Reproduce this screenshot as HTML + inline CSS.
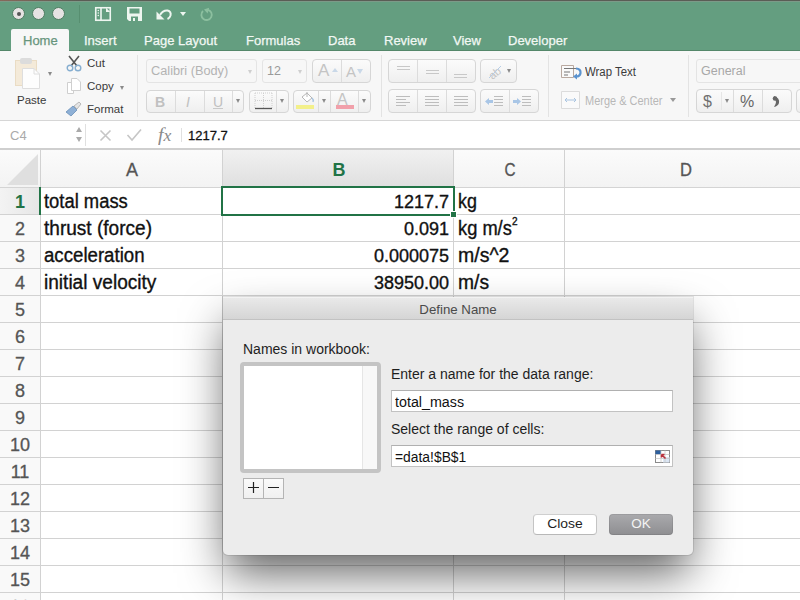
<!DOCTYPE html><html><head><meta charset="utf-8"><style>
*{box-sizing:border-box;margin:0;padding:0}
html,body{width:800px;height:600px;overflow:hidden;background:#fff;font-family:"Liberation Sans",sans-serif}
.a{position:absolute}
.tl{width:13px;height:13px;border-radius:50%;background:#e6e3e3;border:1px solid #4f7d62;top:7px}
.tab{top:33px;font-size:13px;color:#f2f8f4;white-space:nowrap;line-height:15px;-webkit-text-stroke:0.25px currentColor}
.btn{border:1px solid #d6d6d6;border-radius:4px;background:linear-gradient(#fbfbfb,#efefef)}
.box{border:1px solid #e4e4e4;border-radius:3px;background:#f7f7f7}
.vs{width:1px;background:#dedede}
.rt{font-size:12px;color:#333;white-space:nowrap;line-height:14px}
.g{color:#b8b8b8}
.hdr{top:150px;height:37px;font-size:18px;color:#555;text-align:center;line-height:37px;background:linear-gradient(#f6f6f6,#eeeeee)}
.cell{font-size:18px;color:#111;white-space:nowrap;line-height:20px;-webkit-text-stroke:0.35px #111}
.rn{left:0;width:40px;font-size:18px;color:#555;text-align:center;line-height:20px;-webkit-text-stroke:0.3px #555}
.dt{font-size:13px;color:#222;white-space:nowrap;line-height:15px}
</style></head><body>
<div class="a" style="left:0;top:0;width:800px;height:51px;background:#649e80"></div>
<div class="a" style="left:0;top:50px;width:800px;height:1px;background:#54876a"></div>
<div class="a" style="left:0;top:0;width:800px;height:1px;background:linear-gradient(90deg,#86695a,#5a5d55 80px)"></div>
<div class="a" style="left:0;top:1px;width:800px;height:1px;background:#7c9a88"></div>
<div class="a tl" style="left:12px"></div>
<div class="a tl" style="left:32px"></div>
<div class="a tl" style="left:52px"></div>
<div class="a" style="left:17px;top:12px;width:4px;height:4px;border-radius:50%;background:#555"></div>
<div class="a" style="left:79px;top:5px;width:1px;height:18px;background:#578f70"></div>
<svg class="a" style="left:94px;top:6px" width="18" height="16" viewBox="0 0 18 16"><rect x="1.75" y="1.75" width="14.5" height="12.5" fill="none" stroke="#eef6f0" stroke-width="1.6"/><path d="M7 1.75 V14.25" stroke="#eef6f0" stroke-width="1.6"/><circle cx="4.3" cy="4.5" r="0.8" fill="#eef6f0"/><circle cx="4.3" cy="7" r="0.8" fill="#eef6f0"/><circle cx="4.3" cy="9.5" r="0.8" fill="#eef6f0"/><path d="M12 1.75 L16.25 6 H12 Z" fill="#eef6f0"/></svg>
<svg class="a" style="left:126px;top:6px" width="17" height="16" viewBox="0 0 17 16"><path d="M1 1 H16 V15 H3 L1 13 Z" fill="#eef6f0"/><rect x="3.5" y="2.5" width="10" height="5" fill="#649e80"/><rect x="5" y="10.5" width="7" height="4.5" fill="#649e80"/><rect x="7" y="12" width="2" height="3" fill="#eef6f0"/></svg>
<svg class="a" style="left:155px;top:8px" width="19" height="13" viewBox="0 0 19 13"><path d="M5 7 Q8 2 12.5 2.5 Q16.5 3.5 15.5 7.5 Q14.8 10 12.5 11" stroke="#eef6f0" stroke-width="2" fill="none"/><path d="M1.5 3.5 L1.5 11.5 L9.5 11.5 Z" fill="#eef6f0"/></svg>
<div class="a" style="left:180px;top:12px;width:0;height:0;border-left:3px solid transparent;border-right:3px solid transparent;border-top:4px solid #eef6f0"></div>
<svg class="a" style="left:199px;top:7px" width="15" height="15" viewBox="0 0 15 15"><path d="M9 2.8 A5.2 5.2 0 1 1 4 4" stroke="#8cbf9f" stroke-width="1.8" fill="none"/><path d="M9.5 0.5 L9.5 6.5 L5 3.5 Z" fill="#8cbf9f" transform="rotate(15 9 3)"/></svg>
<div class="a" style="left:11px;top:29px;width:58px;height:22px;background:#f7f7f7;border-radius:2px 2px 0 0"></div>
<div class="a tab" style="left:23px;color:#67957d">Home</div>
<div class="a tab" style="left:84px">Insert</div>
<div class="a tab" style="left:144px">Page Layout</div>
<div class="a tab" style="left:246px">Formulas</div>
<div class="a tab" style="left:328px">Data</div>
<div class="a tab" style="left:384px">Review</div>
<div class="a tab" style="left:453px">View</div>
<div class="a tab" style="left:508px">Developer</div>
<div class="a" style="left:0;top:51px;width:800px;height:70px;background:#f7f7f7;border-bottom:1px solid #d6d6d6"></div>
<div class="a" style="left:137px;top:55px;width:1px;height:62px;background:#e3e3e3"></div>
<div class="a" style="left:381px;top:55px;width:1px;height:62px;background:#e3e3e3"></div>
<div class="a" style="left:548px;top:55px;width:1px;height:62px;background:#e3e3e3"></div>
<div class="a" style="left:688px;top:55px;width:1px;height:62px;background:#e3e3e3"></div>
<svg class="a" style="left:14px;top:57px" width="28" height="33" viewBox="0 0 28 33"><rect x="1.5" y="3.5" width="21" height="25" fill="#f4ead9" stroke="#eadcc4"/><rect x="6" y="1" width="12" height="6" rx="2" fill="#dcdcdc"/><path d="M8.5 11.5 H20 L25.5 17 V31.5 H8.5 Z" fill="#fdfdfd" stroke="#dedede"/><path d="M20 11.5 V17 H25.5" fill="none" stroke="#dedede"/></svg>
<div class="a" style="left:48px;top:72px;width:0;height:0;border-left:2.5px solid transparent;border-right:2.5px solid transparent;border-top:4.0px solid #8a8a8a"></div>
<div class="a" style="left:17px;top:94px;font-size:11.5px;color:#3a3a3a;white-space:nowrap;line-height:13.5px;">Paste</div>
<svg class="a" style="left:66px;top:55px" width="16" height="17" viewBox="0 0 16 17"><path d="M3 1 L11 11 M13 1 L5 11" stroke="#555" stroke-width="1.6" fill="none"/><circle cx="4" cy="13" r="2.8" fill="none" stroke="#86aed0" stroke-width="1.4"/><circle cx="12" cy="13" r="2.8" fill="none" stroke="#86aed0" stroke-width="1.4"/></svg>
<div class="a" style="left:87px;top:57px;font-size:11.5px;color:#3a3a3a;white-space:nowrap;line-height:13.5px;">Cut</div>
<svg class="a" style="left:66px;top:77px" width="16" height="18" viewBox="0 0 16 18"><path d="M1.5 5.5 H7.5 V16.5 H1.5 Z" fill="#fff" stroke="#cfcfcf"/><path d="M5.5 1.5 H11 L14.5 5 V13.5 H5.5 Z" fill="#fff" stroke="#cfcfcf"/></svg>
<div class="a" style="left:87px;top:80px;font-size:11.5px;color:#3a3a3a;white-space:nowrap;line-height:13.5px;">Copy</div>
<div class="a" style="left:120px;top:86px;width:0;height:0;border-left:2.5px solid transparent;border-right:2.5px solid transparent;border-top:4.0px solid #8a8a8a"></div>
<svg class="a" style="left:65px;top:101px" width="18" height="16" viewBox="0 0 18 16"><path d="M1 11 L8 5 L12 9 L6 15 Z" fill="#8eb0d6" stroke="#6a8fb8" stroke-width="0.8"/><path d="M9 5 L14 1 L16 3 L12 8 Z" fill="#e5e5e5" stroke="#aaa" stroke-width="0.8"/></svg>
<div class="a" style="left:87px;top:103px;font-size:11.5px;color:#3a3a3a;white-space:nowrap;line-height:13.5px;">Format</div>
<div class="a box" style="left:146px;top:59px;width:111px;height:24px"></div>
<div class="a" style="left:151px;top:64px;font-size:12.5px;color:#b3b3b3;white-space:nowrap;line-height:14.5px;transform:scaleX(1.02);transform-origin:left">Calibri (Body)</div>
<div class="a" style="left:248px;top:70px;width:0;height:0;border-left:2.5px solid transparent;border-right:2.5px solid transparent;border-top:4.0px solid #cfcfcf"></div>
<div class="a box" style="left:262px;top:59px;width:45px;height:24px"></div>
<div class="a" style="left:267px;top:64px;font-size:12.5px;color:#9a9a9a;white-space:nowrap;line-height:14.5px;">12</div>
<div class="a" style="left:298px;top:70px;width:0;height:0;border-left:2.5px solid transparent;border-right:2.5px solid transparent;border-top:4.0px solid #cfcfcf"></div>
<div class="a btn" style="left:312px;top:59px;width:59px;height:24px"></div>
<div class="a" style="left:341px;top:60px;width:1px;height:22px;background:#dcdcdc"></div>
<div class="a" style="left:318px;top:61px;font-size:17px;color:#c4c4c4;white-space:nowrap;line-height:19px;">A</div>
<div class="a" style="left:332px;top:68px;width:0;height:0;border-left:3.5px solid transparent;border-right:3.5px solid transparent;border-bottom:4px solid #c9d8e8"></div>
<div class="a" style="left:346px;top:63px;font-size:15px;color:#c4c4c4;white-space:nowrap;line-height:17px;">A</div>
<div class="a" style="left:357px;top:69px;width:0;height:0;border-left:3.5px solid transparent;border-right:3.5px solid transparent;border-top:5.6px solid #c9d8e8"></div>
<div class="a btn" style="left:146px;top:90px;width:98px;height:23px"></div>
<div class="a" style="left:175px;top:91px;width:1px;height:21px;background:#dcdcdc"></div>
<div class="a" style="left:204px;top:91px;width:1px;height:21px;background:#dcdcdc"></div>
<div class="a" style="left:232px;top:91px;width:1px;height:21px;background:#dcdcdc"></div>
<div class="a" style="left:155px;top:94px;font-size:14px;color:#c0c0c0;white-space:nowrap;line-height:16px;font-weight:bold">B</div>
<div class="a" style="left:186px;top:94px;font-size:14px;color:#c0c0c0;white-space:nowrap;line-height:16px;font-style:italic">I</div>
<div class="a" style="left:213px;top:94px;font-size:14px;color:#c0c0c0;white-space:nowrap;line-height:16px;">U</div>
<div class="a" style="left:213px;top:108px;width:10px;height:1px;background:#c8c8c8"></div>
<div class="a" style="left:236px;top:99px;width:0;height:0;border-left:2.5px solid transparent;border-right:2.5px solid transparent;border-top:4.0px solid #8a8a8a"></div>
<div class="a btn" style="left:249px;top:90px;width:40px;height:23px"></div>
<div class="a" style="left:276px;top:91px;width:1px;height:21px;background:#dcdcdc"></div>
<svg class="a" style="left:254px;top:92px" width="19" height="18" viewBox="0 0 19 18"><path d="M1 1 H18 M1 8.5 H18 M1 1 V16 M9.5 1 V16 M18 1 V16" stroke="#cfcfcf" stroke-dasharray="1 1" fill="none"/><path d="M1 16.5 H18" stroke="#555" stroke-width="1.3"/></svg>
<div class="a" style="left:280px;top:99px;width:0;height:0;border-left:2.5px solid transparent;border-right:2.5px solid transparent;border-top:4.0px solid #8a8a8a"></div>
<div class="a btn" style="left:293px;top:90px;width:78px;height:23px"></div>
<div class="a" style="left:318px;top:91px;width:1px;height:21px;background:#dcdcdc"></div>
<div class="a" style="left:330px;top:91px;width:1px;height:21px;background:#dcdcdc"></div>
<div class="a" style="left:358px;top:91px;width:1px;height:21px;background:#dcdcdc"></div>
<svg class="a" style="left:298px;top:91px" width="18" height="13" viewBox="0 0 18 13"><path d="M4 6 L9 2 L14 7 L9 11 Z" fill="#fff" stroke="#b7b7b7"/><path d="M9 1 V6" stroke="#b7b7b7"/><path d="M14 7 Q16 9 15 11" stroke="#a8c4e0" stroke-width="1.5" fill="none"/></svg>
<div class="a" style="left:296px;top:105px;width:18px;height:4px;background:#f3f08a"></div>
<div class="a" style="left:322px;top:99px;width:0;height:0;border-left:2.5px solid transparent;border-right:2.5px solid transparent;border-top:4.0px solid #8a8a8a"></div>
<div class="a" style="left:337px;top:91px;font-size:16px;color:#c4c4c4;white-space:nowrap;line-height:18px;">A</div>
<div class="a" style="left:336px;top:105px;width:18px;height:4px;background:#f1a0aa"></div>
<div class="a" style="left:362px;top:99px;width:0;height:0;border-left:2.5px solid transparent;border-right:2.5px solid transparent;border-top:4.0px solid #8a8a8a"></div>
<div class="a btn" style="left:388px;top:59px;width:88px;height:24px"></div>
<div class="a" style="left:417px;top:60px;width:1px;height:22px;background:#dcdcdc"></div>
<div class="a" style="left:446px;top:60px;width:1px;height:22px;background:#dcdcdc"></div>
<div class="a btn" style="left:388px;top:89px;width:88px;height:24px"></div>
<div class="a" style="left:417px;top:90px;width:1px;height:22px;background:#dcdcdc"></div>
<div class="a" style="left:446px;top:90px;width:1px;height:22px;background:#dcdcdc"></div>
<div class="a" style="left:397px;top:66px;width:13px;height:1px;background:#c8c8c8"></div>
<div class="a" style="left:397px;top:69px;width:13px;height:1px;background:#c8c8c8"></div>
<div class="a" style="left:426px;top:70px;width:13px;height:1px;background:#c8c8c8"></div>
<div class="a" style="left:426px;top:73px;width:13px;height:1px;background:#c8c8c8"></div>
<div class="a" style="left:454px;top:74px;width:13px;height:1px;background:#c8c8c8"></div>
<div class="a" style="left:454px;top:77px;width:13px;height:1px;background:#c8c8c8"></div>
<div class="a" style="left:396px;top:96px;width:14px;height:1px;background:#bdbdbd"></div>
<div class="a" style="left:396px;top:99px;width:10px;height:1px;background:#bdbdbd"></div>
<div class="a" style="left:396px;top:102px;width:14px;height:1px;background:#bdbdbd"></div>
<div class="a" style="left:396px;top:105px;width:10px;height:1px;background:#bdbdbd"></div>
<div class="a" style="left:425px;top:96px;width:14px;height:1px;background:#bdbdbd"></div>
<div class="a" style="left:425px;top:99px;width:14px;height:1px;background:#bdbdbd"></div>
<div class="a" style="left:425px;top:102px;width:14px;height:1px;background:#bdbdbd"></div>
<div class="a" style="left:425px;top:105px;width:14px;height:1px;background:#bdbdbd"></div>
<div class="a" style="left:454px;top:96px;width:14px;height:1px;background:#bdbdbd"></div>
<div class="a" style="left:454px;top:99px;width:14px;height:1px;background:#bdbdbd"></div>
<div class="a" style="left:454px;top:102px;width:14px;height:1px;background:#bdbdbd"></div>
<div class="a" style="left:454px;top:105px;width:14px;height:1px;background:#bdbdbd"></div>
<div class="a btn" style="left:480px;top:59px;width:37px;height:24px"></div>
<svg class="a" style="left:486px;top:63px" width="18" height="16" viewBox="0 0 18 16"><text x="1" y="14" font-size="11" fill="#c4c4c4" transform="rotate(-40 8 8)" font-family="Liberation Sans">ab</text><path d="M3 15 L15 3" stroke="#b6cde6" stroke-width="1"/></svg>
<div class="a" style="left:507px;top:69px;width:0;height:0;border-left:2.5px solid transparent;border-right:2.5px solid transparent;border-top:4.0px solid #8a8a8a"></div>
<div class="a btn" style="left:480px;top:89px;width:59px;height:24px"></div>
<div class="a" style="left:509px;top:90px;width:1px;height:22px;background:#dcdcdc"></div>
<svg class="a" style="left:485px;top:98px" width="8" height="7" viewBox="0 0 8 7"><path d="M0 3.5 L4 0 V2 H8 V5 H4 V7 Z" fill="#a9c6e6"/></svg>
<div class="a" style="left:494px;top:96px;width:9px;height:1px;background:#bdbdbd"></div>
<div class="a" style="left:494px;top:99px;width:9px;height:1px;background:#bdbdbd"></div>
<div class="a" style="left:494px;top:102px;width:9px;height:1px;background:#bdbdbd"></div>
<div class="a" style="left:494px;top:105px;width:9px;height:1px;background:#bdbdbd"></div>
<svg class="a" style="left:513px;top:98px" width="8" height="7" viewBox="0 0 8 7"><path d="M8 3.5 L4 0 V2 H0 V5 H4 V7 Z" fill="#a9c6e6"/></svg>
<div class="a" style="left:522px;top:96px;width:9px;height:1px;background:#bdbdbd"></div>
<div class="a" style="left:522px;top:99px;width:9px;height:1px;background:#bdbdbd"></div>
<div class="a" style="left:522px;top:102px;width:9px;height:1px;background:#bdbdbd"></div>
<div class="a" style="left:522px;top:105px;width:9px;height:1px;background:#bdbdbd"></div>
<svg class="a" style="left:561px;top:64px" width="22" height="16" viewBox="0 0 22 16"><path d="M0.5 1.5 H12.5 V13.5 H0.5 Z" fill="#fafafa" stroke="#b9a9a0"/><path d="M3 4.5 H16 M3 8 H9 M3 11 H7" stroke="#777" stroke-width="1"/><path d="M15 4.5 Q20 5 19.5 9 Q19 12.5 15 12.5" stroke="#5b93cf" stroke-width="2.2" fill="none"/><path d="M12 12.5 L16 9.5 V15.5 Z" fill="#5b93cf"/></svg>
<div class="a" style="left:585px;top:65px;font-size:12px;color:#3c3c3c;white-space:nowrap;line-height:14px;transform:scaleX(0.95);transform-origin:left">Wrap Text</div>
<svg class="a" style="left:561px;top:91px" width="19" height="18" viewBox="0 0 19 18"><path d="M0.5 0.5 H18.5 V17.5 H0.5 Z" fill="#fafafa" stroke="#dcdcdc"/><path d="M4 9 H15 M4 9 L6 7 M4 9 L6 11 M15 9 L13 7 M15 9 L13 11" stroke="#a9c4e0" fill="none"/></svg>
<div class="a" style="left:585px;top:94px;font-size:12px;color:#b8b8b8;white-space:nowrap;line-height:14px;transform:scaleX(0.915);transform-origin:left">Merge &amp; Center</div>
<div class="a" style="left:670px;top:98px;width:0;height:0;border-left:3.0px solid transparent;border-right:3.0px solid transparent;border-top:4.8px solid #999"></div>
<div class="a box" style="left:696px;top:59px;width:109px;height:24px"></div>
<div class="a" style="left:701px;top:64px;font-size:12.5px;color:#a8a8a8;white-space:nowrap;line-height:14.5px;">General</div>
<div class="a btn" style="left:696px;top:89px;width:96px;height:24px"></div>
<div class="a" style="left:733px;top:90px;width:1px;height:22px;background:#dcdcdc"></div>
<div class="a" style="left:762px;top:90px;width:1px;height:22px;background:#dcdcdc"></div>
<div class="a" style="left:721px;top:92px;width:1px;height:18px;background:#e6e6e6"></div>
<div class="a" style="left:703px;top:93px;font-size:16px;color:#707070;white-space:nowrap;line-height:18px;">$</div>
<div class="a" style="left:725px;top:99px;width:0;height:0;border-left:2.5px solid transparent;border-right:2.5px solid transparent;border-top:4.0px solid #8a8a8a"></div>
<div class="a" style="left:740px;top:93px;font-size:16px;color:#666;white-space:nowrap;line-height:18px;">%</div>
<svg class="a" style="left:772px;top:95px" width="9" height="13" viewBox="0 0 9 13"><path d="M2 1 Q8 3 7 8 Q6 11 2 12 Q4 9 4 7 Q4 5 2 4 Z" fill="#666"/><circle cx="3" cy="3.5" r="2.3" fill="#666"/></svg>
<div class="a btn" style="left:796px;top:89px;width:34px;height:24px"></div>
<div class="a" style="left:0;top:121px;width:800px;height:29px;background:#fff;border-bottom:2px solid #cfcfcf"></div>
<div class="a" style="left:10px;top:128px;font-size:13px;color:#aaa;line-height:15px">C4</div>
<div class="a vs" style="left:85px;top:124px;height:22px;background:#e0e0e0"></div>
<div class="a" style="left:76px;top:127px;width:0;height:0;border-left:3.5px solid transparent;border-right:3.5px solid transparent;border-bottom:5px solid #aaa"></div>
<div class="a" style="left:76px;top:137px;width:0;height:0;border-left:3.5px solid transparent;border-right:3.5px solid transparent;border-top:5px solid #aaa"></div>
<svg class="a" style="left:99px;top:129px" width="13" height="13" viewBox="0 0 13 13"><path d="M1.5 1.5 L11.5 11.5 M11.5 1.5 L1.5 11.5" stroke="#c6c6c6" stroke-width="1.6"/></svg>
<svg class="a" style="left:126px;top:128px" width="16" height="14" viewBox="0 0 16 14"><path d="M1.5 7 L6 12 L15 1.5" stroke="#c6c6c6" stroke-width="1.6" fill="none"/></svg>
<div class="a" style="left:158px;top:125px;font-family:'Liberation Serif',serif;font-style:italic;font-size:18px;color:#8a8a8a;line-height:20px;transform:scaleX(1.1);transform-origin:0 0">f<span style="font-size:16px">x</span></div>
<div class="a vs" style="left:181px;top:128px;height:14px;background:#e0e0e0"></div>
<div class="a" style="left:188px;top:128px;font-size:13px;color:#111;line-height:15px;-webkit-text-stroke:0.3px #111">1217.7</div>
<div class="a" style="left:0;top:150px;width:800px;height:37px;background:linear-gradient(#fbfbfb,#f3f3f3)"></div>
<div class="a" style="left:222px;top:150px;width:231px;height:37px;background:linear-gradient(#f1f1f1,#dfdfdf)"></div>
<svg class="a" style="left:7px;top:154px" width="31" height="31" viewBox="0 0 31 31"><path d="M31 0 V31 H0 Z" fill="#dfdfdf"/></svg>
<div class="a" style="left:82px;top:160px;width:100px;text-align:center;font-size:18px;line-height:20px;color:#555;-webkit-text-stroke:0.3px #555;transform:scaleX(1.0)">A</div>
<div class="a" style="left:289px;top:160px;width:100px;text-align:center;font-size:18px;line-height:20px;color:#217346;font-weight:bold;transform:scaleX(1.0)">B</div>
<div class="a" style="left:459.5px;top:160px;width:100px;text-align:center;font-size:18px;line-height:20px;color:#555;-webkit-text-stroke:0.3px #555;transform:scaleX(0.85)">C</div>
<div class="a" style="left:635.5px;top:160px;width:100px;text-align:center;font-size:18px;line-height:20px;color:#555;-webkit-text-stroke:0.3px #555;transform:scaleX(0.92)">D</div>
<div class="a" style="left:0;top:187px;width:800px;height:1px;background:#d4d4d4"></div>
<div class="a" style="left:0;top:188px;width:40px;height:412px;background:#f9f9f9"></div>
<div class="a" style="left:0;top:188px;width:40px;height:26px;background:linear-gradient(90deg,#f3f3f3,#e6e6e6)"></div>
<div class="a" style="left:40px;top:150px;width:1px;height:450px;background:#d2d2d2"></div>
<div class="a" style="left:222px;top:150px;width:1px;height:450px;background:#d2d2d2"></div>
<div class="a" style="left:453px;top:150px;width:1px;height:450px;background:#d2d2d2"></div>
<div class="a" style="left:564px;top:150px;width:1px;height:450px;background:#d2d2d2"></div>
<div class="a" style="left:0;top:214px;width:800px;height:1px;background:#d2d2d2"></div>
<div class="a" style="left:0;top:241px;width:800px;height:1px;background:#d2d2d2"></div>
<div class="a" style="left:0;top:268px;width:800px;height:1px;background:#d2d2d2"></div>
<div class="a" style="left:0;top:295px;width:800px;height:1px;background:#d2d2d2"></div>
<div class="a" style="left:0;top:322px;width:800px;height:1px;background:#d2d2d2"></div>
<div class="a" style="left:0;top:349px;width:800px;height:1px;background:#d2d2d2"></div>
<div class="a" style="left:0;top:376px;width:800px;height:1px;background:#d2d2d2"></div>
<div class="a" style="left:0;top:403px;width:800px;height:1px;background:#d2d2d2"></div>
<div class="a" style="left:0;top:430px;width:800px;height:1px;background:#d2d2d2"></div>
<div class="a" style="left:0;top:457px;width:800px;height:1px;background:#d2d2d2"></div>
<div class="a" style="left:0;top:484px;width:800px;height:1px;background:#d2d2d2"></div>
<div class="a" style="left:0;top:511px;width:800px;height:1px;background:#d2d2d2"></div>
<div class="a" style="left:0;top:538px;width:800px;height:1px;background:#d2d2d2"></div>
<div class="a" style="left:0;top:565px;width:800px;height:1px;background:#d2d2d2"></div>
<div class="a" style="left:0;top:592px;width:800px;height:1px;background:#d2d2d2"></div>
<div class="a" style="left:0;top:619px;width:800px;height:1px;background:#d2d2d2"></div>
<div class="a rn" style="top:192px;color:#217346;font-weight:bold;-webkit-text-stroke:0">1</div>
<div class="a rn" style="top:219px">2</div>
<div class="a rn" style="top:246px">3</div>
<div class="a rn" style="top:273px">4</div>
<div class="a rn" style="top:300px">5</div>
<div class="a rn" style="top:327px">6</div>
<div class="a rn" style="top:354px">7</div>
<div class="a rn" style="top:381px">8</div>
<div class="a rn" style="top:408px">9</div>
<div class="a rn" style="top:435px">10</div>
<div class="a rn" style="top:462px">11</div>
<div class="a rn" style="top:489px">12</div>
<div class="a rn" style="top:516px">13</div>
<div class="a rn" style="top:543px">14</div>
<div class="a rn" style="top:570px">15</div>
<div class="a rn" style="top:597px">16</div>
<div class="a" style="left:39px;top:187px;width:2px;height:28px;background:#217346"></div>
<div class="a cell" style="left:44px;top:191px;font-size:19.5px;transform:scaleX(0.943);transform-origin:0 0">total mass</div>
<div class="a cell" style="left:44px;top:218px;font-size:19.5px;transform:scaleX(0.977);transform-origin:0 0">thrust (force)</div>
<div class="a cell" style="left:44px;top:245px;font-size:19.5px;transform:scaleX(0.956);transform-origin:0 0">acceleration</div>
<div class="a cell" style="left:44px;top:272px;font-size:19.5px;transform:scaleX(0.978);transform-origin:0 0">initial velocity</div>
<div class="a cell" style="left:458px;top:191px;font-size:19.5px;transform:scaleX(0.917);transform-origin:0 0">kg</div>
<div class="a cell" style="left:458px;top:218px;font-size:19.5px;transform:scaleX(0.9375);transform-origin:0 0">kg m/s</div>
<div class="a cell" style="left:512px;top:216px;font-size:10px;line-height:11px">2</div>
<div class="a cell" style="left:458px;top:245px;font-size:19.5px;transform:scaleX(1.0);transform-origin:0 0">m/s^2</div>
<div class="a cell" style="left:458px;top:272px;font-size:19.5px;transform:scaleX(0.987);transform-origin:0 0">m/s</div>
<div class="a cell" style="left:222px;width:227px;text-align:right;top:192px">1217.7</div>
<div class="a cell" style="left:222px;width:227px;text-align:right;top:219px">0.091</div>
<div class="a cell" style="left:222px;width:227px;text-align:right;top:246px">0.000075</div>
<div class="a cell" style="left:222px;width:227px;text-align:right;top:273px">38950.00</div>
<div class="a" style="left:221px;top:186px;width:234px;height:30px;border:2px solid #217346"></div>
<div class="a" style="left:450px;top:211px;width:7px;height:7px;background:#fff"></div>
<div class="a" style="left:451px;top:212px;width:5px;height:5px;background:#217346"></div>
<div class="a" style="left:223px;top:297px;width:470px;height:258px;border-radius:0 0 5px 5px;background:#ececec;box-shadow:0 22px 45px -4px rgba(0,0,0,0.62),0 0 0 1px rgba(0,0,0,0.09);overflow:hidden">
<div class="a" style="left:0;top:0;width:470px;height:23px;background:linear-gradient(#e9e9e9,#d5d5d5);border-top:1px solid #f2f2f2;border-bottom:1px solid #c2c2c2"></div>
<div class="a" style="left:0;top:5px;width:470px;text-align:center;font-size:13px;color:#4a4a4a;line-height:15px;transform:scaleX(1.02)">Define Name</div>
</div>
<div class="a" style="left:243px;top:341px;font-size:14px;color:#1e1e1e;white-space:nowrap;line-height:16px;transform:scaleX(1.0);transform-origin:0 0">Names in workbook:</div>
<div class="a" style="left:240px;top:362px;width:141px;height:111px;border:4px solid #c4c4c4;border-radius:4px;background:#fff"></div>
<div class="a" style="left:362px;top:366px;width:15px;height:103px;background:#f8f8f8;border-left:1px solid #e6e6e6"></div>
<div class="a" style="left:243px;top:478px;width:41px;height:21px;border:1px solid #b4b4b4;background:linear-gradient(#fafafa,#f0f0f0)"></div>
<div class="a" style="left:263px;top:478px;width:1px;height:21px;background:#b4b4b4"></div>
<svg class="a" style="left:243px;top:478px" width="41" height="21" viewBox="0 0 41 21"><path d="M5 9.5 H16 M10.5 4 V15 M25 9.5 H36" stroke="#222" stroke-width="1.2"/></svg>
<div class="a" style="left:391px;top:366px;font-size:14px;color:#1e1e1e;white-space:nowrap;line-height:16px;transform:scaleX(1.0);transform-origin:0 0">Enter a name for the data range:</div>
<div class="a" style="left:391px;top:390px;width:282px;height:22px;border:1px solid #c2c2c2;border-top-color:#b0b0b0;background:#fff"></div>
<div class="a" style="left:395px;top:394px;font-size:14px;color:#111;white-space:nowrap;line-height:16px;transform:scaleX(1.02);transform-origin:0 0">total_mass</div>
<div class="a" style="left:391px;top:421px;font-size:14px;color:#1e1e1e;white-space:nowrap;line-height:16px;transform:scaleX(1.0);transform-origin:0 0">Select the range of cells:</div>
<div class="a" style="left:391px;top:445px;width:282px;height:22px;border:1px solid #c2c2c2;border-top-color:#b0b0b0;background:#fff"></div>
<div class="a" style="left:395px;top:449px;font-size:14px;color:#111;white-space:nowrap;line-height:16px;transform:scaleX(0.99);transform-origin:0 0">=data!$B$1</div>
<svg class="a" style="left:655px;top:450px" width="15" height="13" viewBox="0 0 15 13"><rect x="0.5" y="0.5" width="14" height="12" fill="#fff" stroke="#8a8a8a"/><rect x="8" y="7" width="6.5" height="5.5" fill="#dbe6f4"/><rect x="0.5" y="0.5" width="5.5" height="4" fill="#2d5f9e"/><path d="M6 0.5 V12.5 M10 0.5 V12.5 M0.5 4.5 H14.5 M0.5 8.5 H14.5" stroke="#c9c9c9" stroke-width="0.8"/><path d="M6.5 4.5 L10.5 8.5 M6.5 4.5 H9.5 M6.5 4.5 V7.5" stroke="#b8323c" stroke-width="1.6"/></svg>
<div class="a" style="left:533px;top:514px;width:64px;height:21px;border:1px solid #c4c4c4;border-top-color:#cfcfcf;border-bottom-color:#b8b8b8;border-radius:4px;background:#fff"></div>
<div class="a" style="left:533px;top:516px;width:64px;text-align:center;font-size:13.5px;line-height:15px;color:#1e1e1e;transform:scaleX(1.03)">Close</div>
<div class="a" style="left:609px;top:514px;width:64px;height:21px;border-radius:4px;background:linear-gradient(#aaaaad,#8e8e91);box-shadow:inset 0 0 0 1px rgba(0,0,0,0.08)"></div>
<div class="a" style="left:609px;top:516px;width:64px;text-align:center;font-size:13.5px;line-height:15px;color:#f4f4f4">OK</div>
</body></html>
